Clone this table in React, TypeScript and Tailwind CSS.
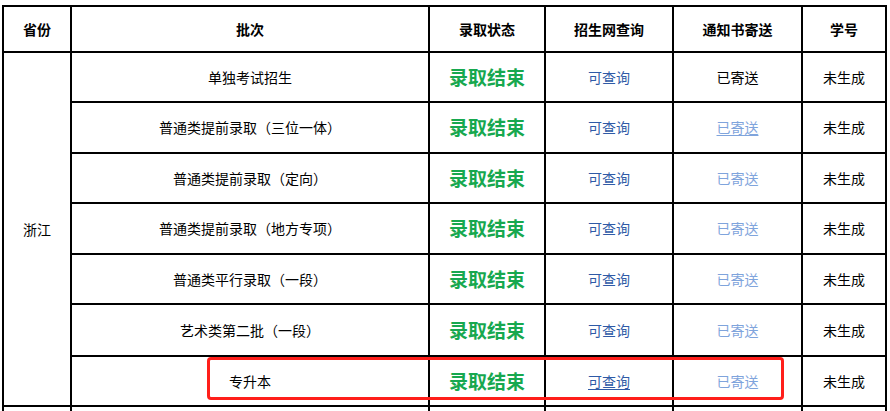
const ROWS = [
  { batch: '单独考试招生', sent: 'plain' },
  { batch: '普通类提前录取（三位一体）', sent: 'link-u' },
  { batch: '普通类提前录取（定向）', sent: 'link' },
  { batch: '普通类提前录取（地方专项）', sent: 'link' },
  { batch: '普通类平行录取（一段）', sent: 'link' },
  { batch: '艺术类第二批（一段）', sent: 'link' },
  { batch: '专升本', sent: 'link', queryUnderline: true },
];

const HEADERS = ['省份', '批次', '录取状态', '招生网查询', '通知书寄送', '学号'];

const cell = 'bg-white flex items-center justify-center';

export default function App() {
  return (
    <div
      className="min-h-screen bg-white pt-[5px] pl-[2px] text-black [text-spacing-trim:space-all]"
      style={{ fontFamily: '"Noto Sans CJK SC", "Noto Sans", sans-serif' }}
    >
      <div className="relative w-fit">
        <div className="grid w-fit grid-cols-[66px_356px_114px_126px_127px_82px] grid-rows-[44px_48px_49px_48px_49px_48px_50px_48px_48px] gap-[2px] bg-black p-[2px]">
          {/* Header */}
          {HEADERS.map((h) => (
            <div key={h} className={`${cell} text-[14px] font-bold`}>
              {h}
            </div>
          ))}

          {/* Province cell spans all batches */}
          <div className={`${cell} row-span-7 text-[14px]`}>浙江</div>

          {ROWS.map((r, i) => (
            <div key={i} className="contents">
              <div className={`${cell} text-[14px]`}>{r.batch}</div>
              <div className={`${cell} text-[19px] font-bold text-[#17a84f]`}>录取结束</div>
              <div className={`${cell} text-[14px] text-[#2f5aa6]`}>
                <span className={r.queryUnderline ? 'underline underline-offset-2' : ''}>可查询</span>
              </div>
              <div
                className={`${cell} text-[14px] ${
                  r.sent === 'plain' ? 'text-black' : 'text-[#7fa4dc]'
                }`}
              >
                <span className={r.sent === 'link-u' ? 'underline underline-offset-2' : ''}>已寄送</span>
              </div>
              <div className={`${cell} text-[14px]`}>未生成</div>
            </div>
          ))}

          {/* Next row, cut off by the window */}
          <div className={cell} />
          <div className={cell} />
          <div className={cell} />
          <div className={cell} />
          <div className={cell} />
          <div className={cell} />
        </div>

        {/* Red highlight box around 专升本 row */}
        <div className="pointer-events-none absolute left-[205px] top-[352px] h-[43px] w-[577px] rounded-[4px] border-[3px] border-[#ff1f1a]" />
      </div>
    </div>
  );
}
